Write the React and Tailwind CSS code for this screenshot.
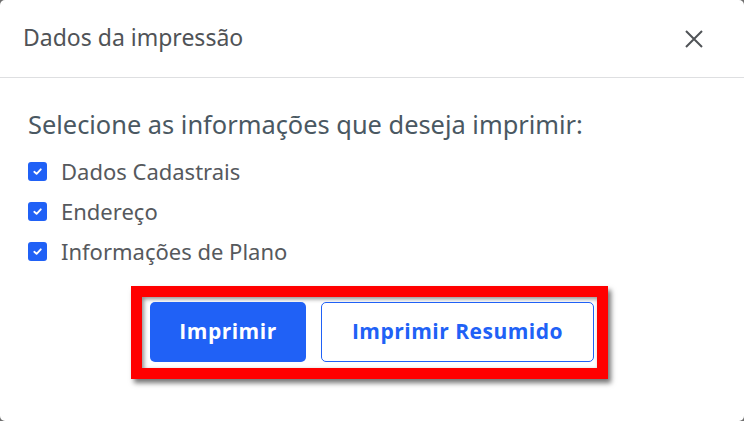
const options = ['Dados Cadastrais', 'Endereço', 'Informações de Plano'];

function CheckBox() {
  return (
    <span className="w-[19px] h-[19px] rounded-[3px] bg-[#2061f6] flex items-center justify-center shrink-0">
      <svg width="11" height="11" viewBox="0 0 12 12" fill="none">
        <path d="M2.5 6.3 L5 8.6 L9.6 3.6" stroke="white" strokeWidth="2" strokeLinecap="round" strokeLinejoin="round" />
      </svg>
    </span>
  );
}

export default function App() {
  return (
    <div className="h-[421px] bg-[#6f6f6f]">
      <div className="h-[421px] bg-white rounded-[5px] flex flex-col font-['Noto_Sans',sans-serif]">
        {/* Header */}
        <header className="h-[78px] border-b border-[#dedfe1] flex items-center justify-between pl-[23px] pr-[40px]">
          <h1 className="text-[23px] text-[#505357] leading-none -mt-[2px]">Dados da impressão</h1>
          <button className="text-[#505357]">
            <svg width="20" height="20" viewBox="0 0 20 20" fill="none">
              <path d="M2 2 L18 18 M18 2 L2 18" stroke="currentColor" strokeWidth="2" />
            </svg>
          </button>
        </header>

        {/* Body */}
        <div className="px-[28px] pt-[29px]">
          <p className="text-[25.4px] leading-[34px] text-[#4a5862]">Selecione as informações que deseja imprimir:</p>
          <ul className="mt-[10px]">
            {options.map(opt => (
              <li key={opt} className="h-[40px] flex items-center gap-[14px]">
                <CheckBox />
                <span className="text-[22px] text-[#56595d]">{opt}</span>
              </li>
            ))}
          </ul>
        </div>

        {/* Footer */}
        <div className="flex justify-center mt-[15px]">
          <div className="mr-[5px] border-[11px] border-[#ff0000] pl-[8px] pr-[3px] pt-[5px] pb-[6px] flex gap-[15px] shadow-[3px_4px_5px_rgba(0,0,0,0.55),inset_2px_2px_4px_rgba(0,0,0,0.45)]">
            <button className="w-[156px] h-[60px] rounded-[5px] bg-[#2061f6] text-white text-[21px] tracking-[0.5px] font-bold font-['Open_Sans',sans-serif]">
              Imprimir
            </button>
            <button className="w-[273px] h-[60px] rounded-[5px] border border-[#2061f6] bg-white text-[#2061f6] text-[21px] tracking-[0.5px] font-bold font-['Open_Sans',sans-serif]">
              Imprimir Resumido
            </button>
          </div>
        </div>
      </div>
    </div>
  );
}
